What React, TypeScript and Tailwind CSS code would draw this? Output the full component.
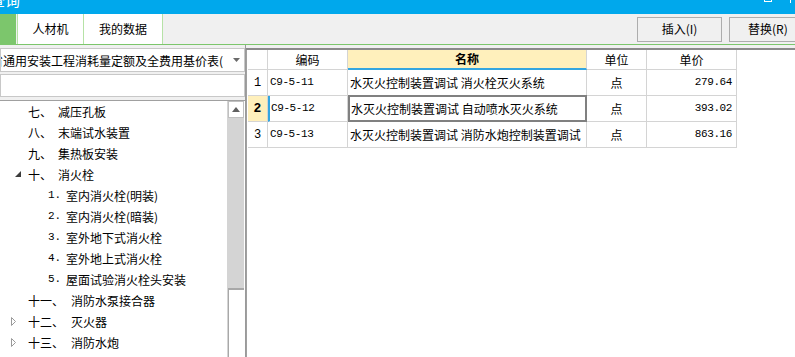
import React from "react";

const cjk = '"Noto Sans CJK SC", "Liberation Sans", sans-serif';
const mono = '"Liberation Mono", "Noto Sans CJK SC", monospace';

type Node = { num: string; label: string; level: 0 | 1; arrow?: "open" | "closed" };

const tree: Node[] = [
  { num: "七、", label: "减压孔板", level: 0 },
  { num: "八、", label: "末端试水装置", level: 0 },
  { num: "九、", label: "集热板安装", level: 0 },
  { num: "十、", label: "消火栓", level: 0, arrow: "open" },
  { num: "1.", label: "室内消火栓(明装)", level: 1 },
  { num: "2.", label: "室内消火栓(暗装)", level: 1 },
  { num: "3.", label: "室外地下式消火栓", level: 1 },
  { num: "4.", label: "室外地上式消火栓", level: 1 },
  { num: "5.", label: "屋面试验消火栓头安装", level: 1 },
  { num: "十一、", label: "消防水泵接合器", level: 0 },
  { num: "十二、", label: "灭火器", level: 0, arrow: "closed" },
  { num: "十三、", label: "消防水炮", level: 0, arrow: "closed" },
];

const rows = [
  { code: "C9-5-11", name: "水灭火控制装置调试 消火栓灭火系统", unit: "点", price: "279.64" },
  { code: "C9-5-12", name: "水灭火控制装置调试 自动喷水灭火系统", unit: "点", price: "393.02" },
  { code: "C9-5-13", name: "水灭火控制装置调试 消防水炮控制装置调试", unit: "点", price: "863.16" },
];

function TreeRow({ n }: { n: Node }) {
  return (
    <div className="h-[21px] flex items-center relative text-[12px] text-black whitespace-nowrap">
      {n.arrow === "open" && (
        <svg className="absolute left-[15px] top-[7px]" width="6" height="6" viewBox="0 0 6 6">
          <polygon points="6,0 6,6 0,6" fill="#3c3c3c" />
        </svg>
      )}
      {n.arrow === "closed" && (
        <svg className="absolute left-[11px] top-[6px]" width="5" height="9" viewBox="0 0 5 9">
          <polygon points="0.5,0.5 4.5,4.5 0.5,8.5" fill="none" stroke="#9a9a9a" />
        </svg>
      )}
      {n.level === 0 ? (
        <>
          <span className={n.num.length > 2 ? "ml-[28px] w-[43px]" : "ml-[28px] w-[30px]"}>{n.num}</span>
          <span>{n.label}</span>
        </>
      ) : (
        <>
          <span className="ml-[48px] w-[18px] text-[11px]" style={{ fontFamily: mono }}>
            {n.num}
          </span>
          <span>{n.label}</span>
        </>
      )}
    </div>
  );
}

export default function App() {
  return (
    <div className="w-[795px] h-[357px] overflow-hidden bg-white flex flex-col" style={{ fontFamily: cjk }}>
      {/* title bar */}
      <div className="h-[14px] bg-[#00a8ec] relative overflow-hidden shrink-0">
        <span className="absolute left-[-10px] top-[-10px] text-[15px] text-white leading-[20px]">查询</span>
        <div className="absolute left-[764px] top-[-6px] w-[8px] h-[8px] border border-white" />
        <div className="absolute left-[790px] top-0 w-[1px] h-[3px] bg-white" />
      </div>

      {/* toolbar */}
      <div className="h-[30px] bg-[#f0f0f0] flex items-stretch shrink-0">
        <div className="w-[16px] bg-[#7cc66c]" />
        <div className="w-[67px] ml-[1px] bg-white border-x border-[#b6e2a6] flex items-center justify-center text-[12px]">
          人材机
        </div>
        <div className="w-[79px] bg-white border-r border-[#b6e2a6] flex items-center justify-center text-[12px]">
          我的数据
        </div>
        <div className="flex-1" />
        <div className="flex items-center gap-[7px]">
          <button className="w-[85px] h-[25px] border border-[#adadad] bg-[#f0f0f0] text-[12px]">插入(I)</button>
          <button className="w-[66px] h-[25px] border border-r-0 border-[#adadad] bg-[#f0f0f0] text-[12px] text-left pl-[18px] whitespace-nowrap">
            替换(R)
          </button>
        </div>
      </div>
      <div className="h-[1px] bg-[#7cc66c] shrink-0" />

      {/* main */}
      <div className="flex-1 flex bg-[#f0f0f0] min-h-0">
        {/* left */}
        <div className="w-[245px] flex flex-col pt-[3px] bg-[#f0f0f0]">
          <div className="h-[24px] bg-white border border-[#c8c8c8] flex items-center overflow-hidden">
            <div className="flex-1 h-full relative overflow-hidden">
              <span className="absolute left-[-10px] top-[3px] text-[12px] whitespace-nowrap">省通用安装工程消耗量定额及全费用基价表(</span>
            </div>
            <div className="h-full w-[16px] bg-white flex items-center justify-center">
              <svg width="7" height="4" viewBox="0 0 7 4">
                <polygon points="0,0 7,0 3.5,4" fill="#6a6a6a" />
              </svg>
            </div>
          </div>
          <div className="h-[23px] mt-[2px] bg-white border border-[#c8c8c8]" />
          <div className="flex-1 mt-[3px] border-t border-[#a0a0a0] bg-white flex min-h-0">
            <div className="flex-1 overflow-hidden">
              {tree.map((n, i) => (
                <TreeRow key={i} n={n} />
              ))}
            </div>
            <div className="w-[17px] flex flex-col border-l border-[#d4d4d4] mr-[1px]">
              <div className="h-[17px] bg-white border border-[#c0c0c0] flex items-center justify-center">
                <svg width="8" height="5" viewBox="0 0 8 5">
                  <polygon points="0,5 8,5 4,0" fill="#606060" />
                </svg>
              </div>
              <div className="h-[172px] bg-[#d4d4d4] border-b-2 border-[#a8a8a8]" />
              <div className="flex-1 bg-white border-l border-[#a8a8a8]" />
            </div>
          </div>
        </div>

        {/* splitter */}
        <div className="w-[1px] bg-[#9a9a9a]" />

        {/* right */}
        <div className="flex-1 flex flex-col pt-[3px] bg-[#f0f0f0]">
          <div className="h-[2px] bg-[#8a8a8a]" />
          <div className="flex-1 bg-white border-l border-[#a0a0a0] pl-[1px]">
            <div className="flex h-[20px] text-[12px]">
              <div className="w-[20px] border-r border-b border-[#d4d4d4]" />
              <div className="w-[80px] border-r border-b border-[#d4d4d4] flex items-center justify-center">编码</div>
              <div className="w-[239px] bg-[#fff0bc] border-r border-[#d4d4d4] border-b-2 border-b-[#34a6e0] flex items-center justify-center font-bold">
                名称
              </div>
              <div className="w-[60px] border-r border-b border-[#d4d4d4] flex items-center justify-center">单位</div>
              <div className="w-[90px] border-r border-b border-[#d4d4d4] flex items-center justify-center">单价</div>
            </div>
            {rows.map((r, i) => {
              const sel = i === 1;
              return (
                <div key={r.code} className="flex h-[26px] text-[12px]">
                  <div
                    className={
                      sel
                        ? "w-[20px] bg-[#fff0bc] border-r border-b border-[#d4d4d4] flex items-center justify-center font-bold text-[13px]"
                        : "w-[20px] border-r border-b border-[#d4d4d4] flex items-center justify-center"
                    }
                    style={{ fontFamily: mono }}
                  >
                    {i + 1}
                  </div>
                  <div
                    className={
                      sel
                        ? "w-[80px] border-l-2 border-l-[#34a6e0] border-r border-b border-[#d4d4d4] flex items-center pl-[1px] text-[11px] tracking-[-0.4px]"
                        : "w-[80px] border-r border-b border-[#d4d4d4] flex items-center pl-[2px] text-[11px] tracking-[-0.4px]"
                    }
                    style={{ fontFamily: mono }}
                  >
                    {r.code}
                  </div>
                  <div
                    className={
                      sel
                        ? "w-[239px] border-2 border-[#808080] -mt-[1px] h-[27px] flex items-center pl-[1px] whitespace-nowrap overflow-hidden"
                        : "w-[239px] border-r border-b border-[#d4d4d4] flex items-center pl-[2px] whitespace-nowrap overflow-hidden"
                    }
                  >
                    {r.name}
                  </div>
                  <div className="w-[60px] border-r border-b border-[#d4d4d4] flex items-center justify-center">{r.unit}</div>
                  <div
                    className="w-[90px] border-r border-b border-[#d4d4d4] flex items-center justify-end pr-[4px] text-[11px] tracking-[-0.4px]"
                    style={{ fontFamily: mono }}
                  >
                    {r.price}
                  </div>
                </div>
              );
            })}
          </div>
        </div>
      </div>
    </div>
  );
}
